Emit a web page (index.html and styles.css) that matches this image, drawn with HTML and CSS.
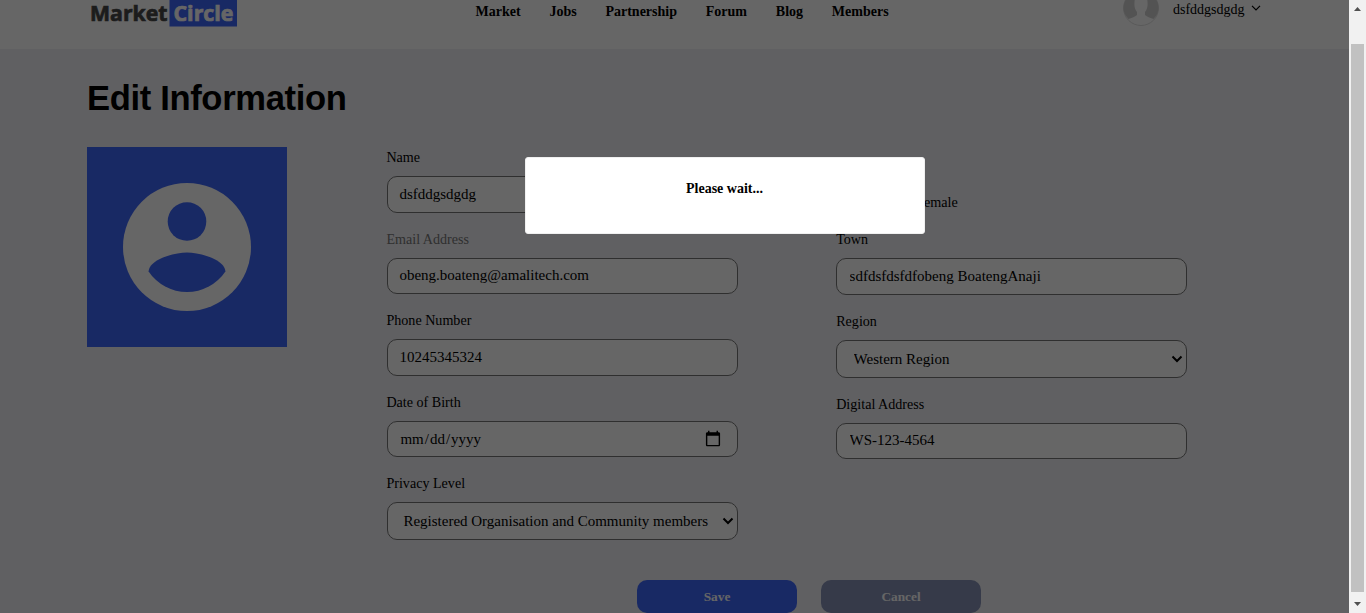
FILE: index.html
```html
<!DOCTYPE html>
<html lang="en">
<head>
<meta charset="utf-8">
<title>Edit Information</title>
<link rel="stylesheet" href="styles.css">
</head>
<body>
<div class="window">
  <div class="page">
    <header class="header">
      <svg class="logo" width="147" height="27" viewBox="0 0 147 27">
        <rect x="79.500" y="0" width="67.500" height="26.500" fill="#3e66fa"/>
        <text class="logo-text" x="0" y="20.500" textLength="77.500" lengthAdjust="spacingAndGlyphs" fill="#484848" stroke="#484848">Market</text>
        <text class="logo-text" x="83.500" y="20.500" textLength="60" lengthAdjust="spacingAndGlyphs" fill="#fff" stroke="#fff">Circle</text>
      </svg>
      <nav class="nav">
        <a>Market</a><a>Jobs</a><a>Partnership</a><a>Forum</a><a>Blog</a><a>Members</a>
      </nav>
      <div class="user">
        <svg class="user-pic" width="36" height="26" viewBox="0 10 36 26">
          <circle cx="18" cy="18" r="17.500" fill="#fff" stroke="#e0e0e0"/>
          <path d="M12 8C11 14 11 18 14 22V25Q12 27 5.500 29Q.5 24 .5 18Q.5 12 4 8ZM24 8C25 14 25 18 22 22V25Q24 27 30.500 29Q35.500 24 35.500 18Q35.500 12 32 8Z" fill="#d0d0d0"/>
        </svg>
        <span class="user-name">dsfddgsdgdg</span>
        <svg class="user-caret" width="10" height="6" viewBox="0 0 10 6"><path d="M1 .8L5 4.800L9 .8" fill="none" stroke="#000" stroke-width="1.200"/></svg>
      </div>
    </header>
    <main class="main">
      <h1 class="title">Edit Information</h1>
      <div class="profile">
        <svg class="photo" width="200" height="200" viewBox="0 0 200 200">
          <rect width="200" height="200" fill="#3e66fa"/>
          <circle cx="100" cy="100" r="64" fill="#fff"/>
          <circle cx="100" cy="74.500" r="19.300" fill="#3e66fa"/>
          <path d="M61.600 124.500C62 113 86 105.500 100 105.500S138 113 138.400 124.500A46.200 46.200 0 0 1 61.600 124.500Z" fill="#3e66fa"/>
        </svg>
        <form class="form">
          <div class="column">
            <label class="field"><span class="label">Name</span><input class="input" value="dsfddgsdgdg"></label>
            <label class="field"><span class="label label-muted">Email Address</span><input class="input" value="obeng.boateng@amalitech.com"></label>
            <label class="field"><span class="label">Phone Number</span><input class="input" value="10245345324"></label>
            <label class="field"><span class="label">Date of Birth</span><input class="input date" type="date"></label>
            <label class="field"><span class="label">Privacy Level</span><span class="select-wrap"><select class="input select"><option>Registered Organisation and Community members</option></select><svg class="chevron" width="12" height="8" viewBox="0 0 12 8"><path d="M1.500 1.500L6 6L10.500 1.500" fill="none" stroke="#000" stroke-width="2"/></svg></span></label>
          </div>
          <div class="column column-right">
            <div class="gender"><span>Female</span></div>
            <label class="field"><span class="label">Town</span><input class="input" value="sdfdsfdsfdfobeng BoatengAnaji"></label>
            <label class="field"><span class="label">Region</span><span class="select-wrap"><select class="input select"><option>Western Region</option></select><svg class="chevron" width="12" height="8" viewBox="0 0 12 8"><path d="M1.500 1.500L6 6L10.500 1.500" fill="none" stroke="#000" stroke-width="2"/></svg></span></label>
            <label class="field"><span class="label">Digital Address</span><input class="input" value="WS-123-4564"></label>
          </div>
        </form>
      </div>
      <div class="actions">
        <button class="button">Save</button>
        <button class="button button-cancel">Cancel</button>
      </div>
    </main>
    <div class="overlay"><div class="dialog">Please wait...</div></div>
  </div>
  <div class="scrollbar">
    <svg class="arrow" width="7" height="4" viewBox="0 0 7 4"><path d="M0 4L3.500 0L7 4Z" fill="#505050"/></svg>
    <div class="thumb"></div>
    <svg class="arrow" width="7" height="4" viewBox="0 0 7 4"><path d="M0 0H7L3.500 4Z" fill="#505050"/></svg>
  </div>
</div>
</body>
</html>
```

FILE: styles.css
```css
* { box-sizing: border-box; }
body { margin: 0; overflow: hidden; font-family: "Liberation Serif", "Times New Roman", serif; font-size: 14px; color: #000; }
.window { display: flex; width: 1366px; height: 613px; overflow: hidden; }
.page { position: relative; width: 1349px; height: 613px; background: #f0f0f5; overflow: hidden; }
.header { display: flex; align-items: flex-start; height: 49px; padding-left: 90px; background: #fff; }
.logo { display: block; overflow: visible; }
.logo-text { font-family: "Open Sans", sans-serif; font-weight: 700; font-size: 21.5px; stroke-width: .7px; }
.nav { display: flex; gap: 28.8px; margin-left: 238.5px; padding-top: 3px; font-size: 14px; font-weight: bold; line-height: 17px; width: 647.5px; }
.user { display: flex; align-items: flex-start; }
.user-pic { display: block; }
.user-name { margin-left: 14px; padding-top: 1px; line-height: 17px; font-size: 14px; }
.user-caret { margin: 5px 0 0 6px; }
.main { padding: 27px 0 0 87px; }
.title { margin: 0; height: 44px; line-height: 45px; font-family: "Liberation Sans", Arial, sans-serif; font-size: 34.6px; letter-spacing: -.35px; }
.profile { display: flex; gap: 100px; height: 406px; margin-top: 27px; }
.photo { display: block; }
.form { display: flex; gap: 98px; }
.column { width: 351px; }
.field { display: block; margin-bottom: 15.95px; }
.label { display: block; height: 20px; margin: 0 0 9px -.6px; line-height: 20px; font-size: 14.1px; }
.column-right .label { margin-left: .2px; }
.label-muted { color: #777; }
.input { display: block; width: 351px; height: 36.6px; margin: 0; padding: 0 11.4px; border: 1px solid #777; border-radius: 10px; background: #fff; font-family: inherit; font-size: 15px; color: #000; }
.column-right .input { padding-left: 12.6px; }
.date { padding-top: 1px; padding-right: 15px; }
.date::-webkit-calendar-picker-indicator { width: 18px; height: 18px; padding: 0; }
.select-wrap { display: block; position: relative; }
.select, .column-right .select { appearance: none; height: 38px; padding: 0 16px 0 15.4px; }
.column-right .select { padding-left: 16.6px; }
.chevron { position: absolute; right: 4px; top: 15px; }
.gender { height: 82.2px; padding: 45px 0 0 80px; line-height: 20px; font-size: 14.2px; }
.actions { display: flex; gap: 24px; margin: 27px 0 0 550px; }
.button { width: 160px; height: 33px; border: 0; border-radius: 10px; background: #3e66fa; color: #fff; font-family: inherit; font-size: 13.333px; font-weight: bold; }
.button-cancel { background: #8791b6; }
.overlay { position: absolute; inset: 0; display: flex; align-items: flex-start; padding: 157px 0 0 525px; background: rgba(0, 0, 0, .6); }
.dialog { width: 400px; height: 77px; padding: 22px 1px 0 0; border: 1px solid #f0f0f0; border-radius: 3px; background: #fff; line-height: 18px; font-size: 14px; font-weight: bold; text-align: center; }
.scrollbar { display: flex; flex-direction: column; align-items: center; justify-content: space-between; width: 17px; height: 613px; padding: 7px 0; background: #f1f1f1; }
.arrow { display: block; }
.thumb { width: 13px; height: 548px; margin-top: 22px; background: #c1c1c1; }
```
